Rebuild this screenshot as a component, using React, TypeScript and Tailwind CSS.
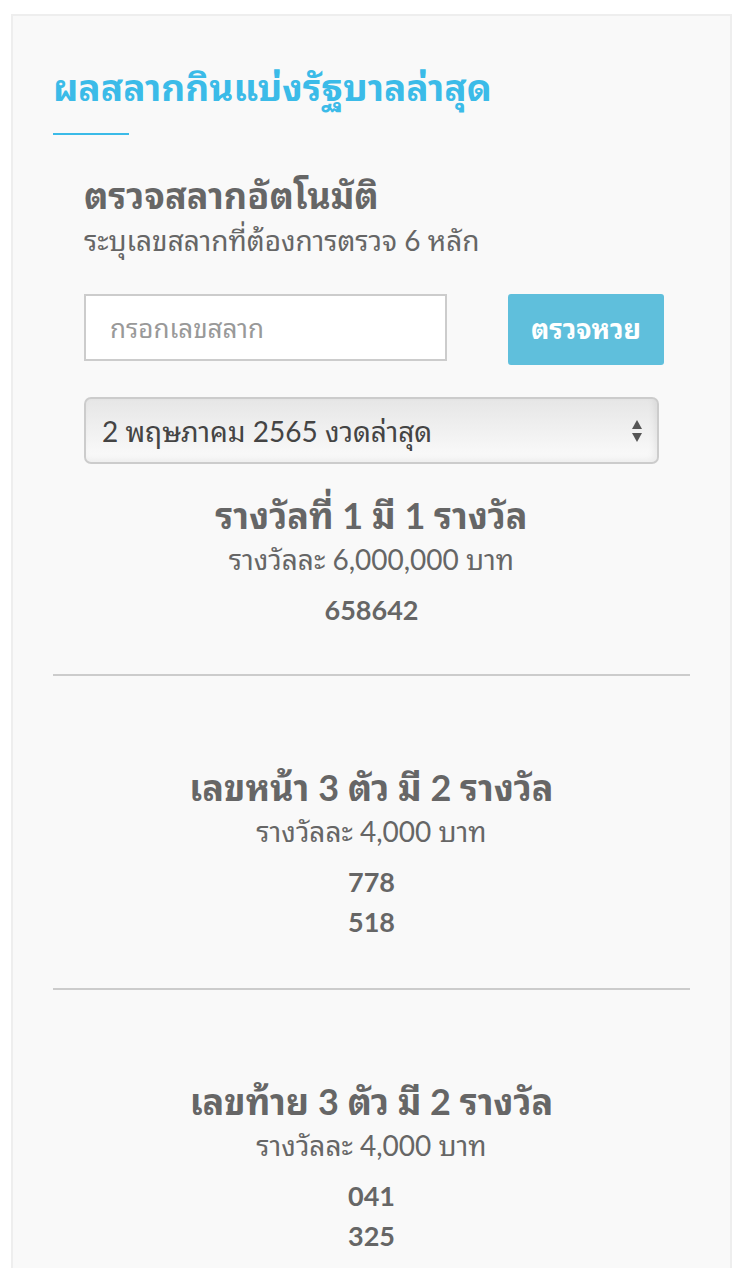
import React from "react";

const prizes = [
  { title: "รางวัลที่ 1 มี 1 รางวัล", amount: "รางวัลละ 6,000,000 บาท", numbers: ["658642"] },
  { title: "เลขหน้า 3 ตัว มี 2 รางวัล", amount: "รางวัลละ 4,000 บาท", numbers: ["778", "518"] },
  { title: "เลขท้าย 3 ตัว มี 2 รางวัล", amount: "รางวัลละ 4,000 บาท", numbers: ["041", "325"] },
];

const App: React.FC = () => {
  return (
    <div className="min-h-[1268px] bg-white pt-[14px] font-[Lato,'Noto_Sans_Thai_Looped',sans-serif]">
      <div className="ml-[11px] w-[721px] min-h-[1260px] border-2 border-[#eeeeee] bg-[#f9f9f9] px-[40px] pt-[46px]">
        {/* Heading */}
        <h2 className="text-[37px] font-bold leading-[50px] text-[#3bbbe8]">ผลสลากกินแบ่งรัฐบาลล่าสุด</h2>
        <div className="mt-[21px] h-[2px] w-[76px] bg-[#3bbbe8]" />

        {/* Checker */}
        <div className="pl-[31px] pr-[26px] pt-[38px]">
          <h3 className="text-[36px] font-bold leading-[44px] text-[#666666]">ตรวจสลากอัตโนมัติ</h3>
          <p className="text-[28px] leading-[46px] text-[#666666]">ระบุเลขสลากที่ต้องการตรวจ 6 หลัก</p>

          <div className="mt-[31px] flex items-start justify-between">
            <input
              type="text"
              placeholder="กรอกเลขสลาก"
              className="h-[67px] w-[363px] border-2 border-[#cccccc] bg-white px-[24px] text-[26px] text-[#555] outline-none placeholder:text-[#999999]"
            />
            <button className="h-[71px] w-[156px] rounded-[3px] bg-[#5fbfdc] text-[27px] font-bold text-white">
              ตรวจหวย
            </button>
          </div>

          <div className="mt-[32px] flex h-[67px] w-[575px] items-center justify-between rounded-[7px] border-2 border-[#cccccc] bg-gradient-to-b from-[#e6e6e6] to-[#fbfbfb] pl-[16px] pr-[14px] shadow-[inset_-3px_-3px_6px_rgba(0,0,0,0.06)]">
            <span className="text-[28px] text-[#444444]">2 พฤษภาคม 2565 งวดล่าสุด</span>
            <svg width="12" height="24" viewBox="0 0 12 24">
              <path d="M6 1 L11 10 L1 10 Z" fill="#555" />
              <path d="M6 23 L11 14 L1 14 Z" fill="#555" />
            </svg>
          </div>
        </div>

        {/* Results */}
        {prizes.map((p, i) => (
          <div key={i}>
            {i > 0 && <div className="h-[2px] bg-[#cccccc]" />}
            <div className={`text-center text-[#666666] ${i === 0 ? "pt-[27px] pb-[44px]" : "pt-[87px] pb-[46px]"}`}>
              <div className="text-[36px] font-bold leading-[48px]">{p.title}</div>
              <div className="text-[28px] leading-[40px]">{p.amount}</div>
              <div className="mt-[11px] text-[27px] font-bold leading-[40px]">
                {p.numbers.map((n) => (
                  <div key={n}>{n}</div>
                ))}
              </div>
            </div>
          </div>
        ))}
      </div>
    </div>
  );
};

export default App;
